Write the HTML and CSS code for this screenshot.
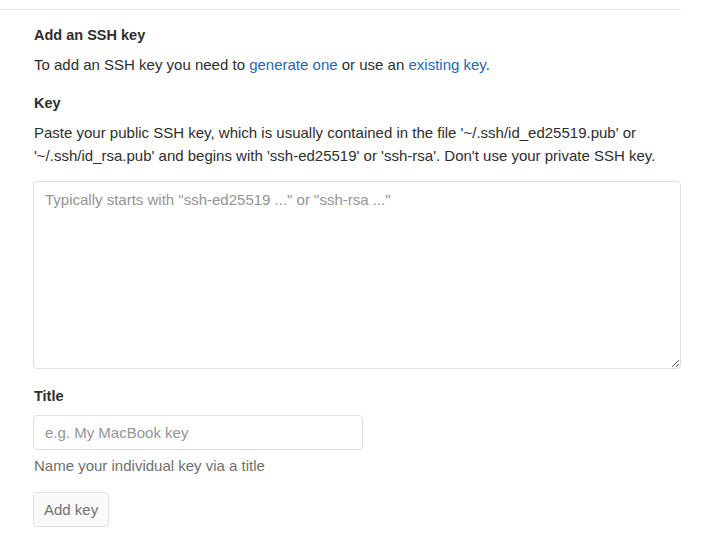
FILE: index.html
```html
<!DOCTYPE html>
<html>
<head>
<meta charset="utf-8">
<link rel="stylesheet" href="styles.css">
</head>
<body>
<div class="page">
  <div class="content">
    <h4 class="heading">Add an SSH key</h4>
    <p class="intro">To add an SSH key you need to <a href="#">generate one</a> or use an <a href="#">existing key</a>.</p>
    <form class="form">
      <label class="label" for="key">Key</label>
      <p class="desc">Paste your public SSH key, which is usually contained in the file '~/.ssh/id_ed25519.pub' or '~/.ssh/id_rsa.pub' and begins with 'ssh-ed25519' or 'ssh-rsa'. Don't use your private SSH key.</p>
      <textarea id="key" class="textarea" placeholder="Typically starts with &quot;ssh-ed25519 ...&quot; or &quot;ssh-rsa ...&quot;"></textarea>
      <label class="label title-label" for="title">Title</label>
      <input id="title" class="input" type="text" placeholder="e.g. My MacBook key">
      <p class="help">Name your individual key via a title</p>
      <button type="button" class="btn">Add key</button>
    </form>
  </div>
</div>
</body>
</html>
```
FILE: styles.css
```css
* { box-sizing: border-box; }
html, body { margin: 0; background: #fff; }
body {
  font-family: "Liberation Sans", Arial, sans-serif;
  color: #2e2e2e;
  font-size: 15px;
  line-height: 23px;
}
.page {
  width: 681px;
  padding-top: 9px;
}
.content {
  border-top: 1px solid #e5e5e5;
  padding: 14px 0 0 34px;
}
.heading {
  margin: 0;
  font-size: 14.5px;
  font-weight: bold;
  line-height: 22px;
}
.intro {
  margin: 7px 0 0;
}
.intro a {
  color: #1b69b6;
  text-decoration: none;
}
.form {
  display: flex;
  flex-direction: column;
  align-items: flex-start;
}
.label {
  font-weight: bold;
  font-size: 14.5px;
  margin-top: 16px;
  line-height: 22px;
}
.desc {
  margin: 7px 0 0;
}
.textarea {
  margin-top: 14px;
  margin-left: -1px;
  width: 648px;
  height: 188px;
  border: 1px solid #dfdfdf;
  border-radius: 4px;
  padding: 6px 11px;
  font-family: inherit;
  font-size: 15px;
  line-height: 23px;
  color: #2e2e2e;
  resize: vertical;
}
.textarea::placeholder, .input::placeholder { color: #949494; }
.title-label { margin-top: 16px; }
.input {
  margin-top: 8px;
  margin-left: -1px;
  width: 330px;
  height: 35px;
  border: 1px solid #dfdfdf;
  border-radius: 4px;
  padding: 0 11px;
  font-family: inherit;
  font-size: 15px;
  color: #2e2e2e;
}
.help {
  margin: 4px 0 0;
  color: #707070;
}
.btn {
  margin-top: 15px;
  margin-left: -1px;
  height: 35px;
  padding: 0 10px;
  background: #fafafa;
  border: 1px solid #e0e0e0;
  border-radius: 4px;
  color: #707070;
  font-family: inherit;
  font-size: 15px;
}
```
